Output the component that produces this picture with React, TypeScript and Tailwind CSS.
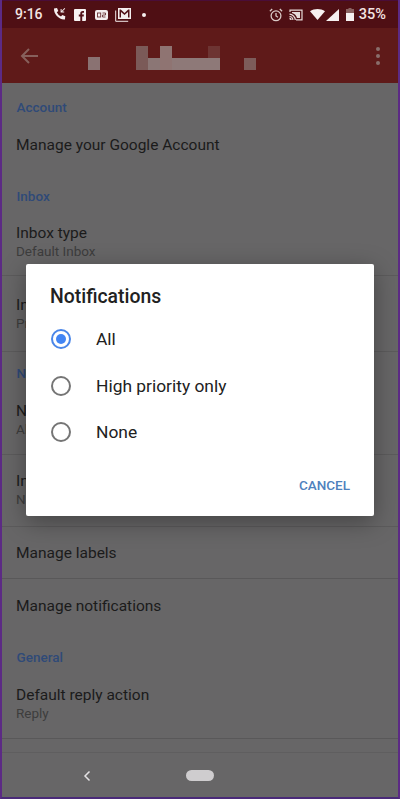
import React from 'react';

const Heading = ({ label, className }: { label: string; className: string }) => (
  <div className={`flex items-end px-[14.5px] pb-[12px] text-[13.5px] leading-4 font-medium text-[#2f4a78] ${className}`}>
    {label}
  </div>
);

const Row = ({
  title,
  sub,
  className
}: {
  title: string;
  sub?: string;
  className: string;
}) => (
  <div className={`px-[14px] ${className}`}>
    <div className="text-[15.5px] leading-5 text-[#1b1b1b]">{title}</div>
    {sub && <div className="mt-[-2px] text-[13.5px] leading-5 text-[#3d3d3d]">{sub}</div>}
  </div>
);

const Radio = ({ label, checked }: { label: string; checked?: boolean }) => (
  <div className="flex h-[46.5px] items-center">
    <div
      className={`ml-[0.5px] flex h-[20px] w-[20px] items-center justify-center rounded-full border-2 ${
        checked ? 'border-[#4a86e8]' : 'border-[#757575]'
      }`}
    >
      {checked && <div className="h-[10px] w-[10px] rounded-full bg-[#4285f4]" />}
    </div>
    <span className="ml-[25.5px] text-[17.4px] text-[#212121]">{label}</span>
  </div>
);

const StatusLeft = () => (
  <div className="flex items-center">
    <span className="ml-[15px] w-[38px] text-[14px] font-medium text-[#f3e4e2]">9:16</span>
    <svg width="14" height="14" viewBox="0 0 14 14" className="mt-[-1px]" fill="#f5eeee">
      <path d="M1 1.5 4 1l1.3 3-1.5 1.2a8 8 0 0 0 4.2 4.2L9.3 8l3 1.2-.4 3.2C6 13 .6 7 1 1.5Z" />
      <path d="M11.5 1 8.6 3.9V2H7.6v3.6h3.6v-1H9.3L12.2 1.7Z" />
    </svg>
    <svg width="12" height="12" viewBox="0 0 12 12" className="ml-[7px]">
      <rect width="12" height="12" rx="1" fill="#f7f2f2" />
      <path d="M8.2 12V7.4h1.5l.2-1.8H8.2V4.5c0-.5.2-.8.9-.8h.9V2.1H8.7C7.2 2.1 6.3 3 6.3 4.4v1.2H4.8v1.8h1.5V12Z" fill="#521218" />
    </svg>
    <svg width="13" height="10" viewBox="0 0 13 10" className="ml-[9px]">
      <rect width="13" height="10" rx="2" fill="#f4eeee" />
      <rect x="2.5" y="3" width="3.2" height="4" fill="none" stroke="#6a3436" strokeWidth="0.9" />
      <path d="M7.5 3h3v2h-3v2h3" fill="none" stroke="#6a3436" strokeWidth="0.9" />
    </svg>
    <svg width="16" height="15" viewBox="0 0 16 15" className="ml-[7px]">
      <path d="M0.7 3.5v10.8h12.5" fill="none" stroke="#f0e8e8" strokeWidth="1" />
      <rect x="3" y="1" width="13" height="11" fill="#f4eeee" />
      <path d="M4.5 2.5v8h1.5V5l3.5 3 3.5-3v5.5h1.5v-8h-1.3L9.5 6 5.8 2.5Z" fill="#521218" />
    </svg>
    <div className="ml-[11px] h-[4px] w-[4px] rounded-full bg-[#f4eeee]" />
  </div>
);

const StatusRight = () => (
  <div className="flex items-center">
    <svg width="14" height="14" viewBox="0 0 14 14" fill="none" stroke="#d9c9c6" strokeWidth="1.3">
      <circle cx="7" cy="7.8" r="4.9" />
      <path d="M7 5v3l2 1.2M.9 3.2 3.2 1M13.1 3.2 10.8 1" />
    </svg>
    <svg width="14" height="12" viewBox="0 0 14 12" className="ml-[6px]" fill="none" stroke="#e6dad8" strokeWidth="1.2">
      <path d="M1 3V1.2h12v9.6H7" />
      <path d="M.5 5.2a6 6 0 0 1 5.8 5.8M.5 7.5A3.6 3.6 0 0 1 3.9 11" />
      <path d="M.5 9.4A1.6 1.6 0 0 1 2 11" strokeWidth="1.6" />
      <path d="M3 3h8v6H8A7 7 0 0 0 3 4Z" fill="#e6dad8" stroke="none" />
    </svg>
    <svg width="15" height="11" viewBox="0 0 15 11" className="ml-[7px]">
      <path d="M0 2.2C4.3-.7 10.7-.7 15 2.2L7.5 11Z" fill="#f6f0f0" />
    </svg>
    <svg width="13" height="12" viewBox="0 0 13 12" className="ml-[1px]">
      <path d="M13 0v12H0Z" fill="#f6f0f0" />
    </svg>
    <svg width="8" height="13" viewBox="0 0 8 13" className="ml-[7px]">
      <path d="M2.5 0h3v1H8v12H0V1h2.5Z" fill="#8a6261" />
      <rect y="5" width="8" height="8" fill="#f6f0f0" />
    </svg>
    <span className="ml-[5px] text-[14.5px] font-medium text-[#f3e4e2]">35%</span>
  </div>
);

const App: React.FC = () => {
  return (
    <div className="relative h-[799px] w-[400px] overflow-hidden border-x-2 border-b-2 border-x-[#5c2a85] border-b-[#4a2a78] bg-[#676667] font-['Roboto',sans-serif]">
      <div className="-mx-[2px] flex h-[28px] items-center justify-between border-t border-t-[#4a0d38] bg-[#4f0f14] pr-[14px]">
        <StatusLeft />
        <StatusRight />
      </div>

      <div className="relative -mx-[2px] flex h-[55px] items-center justify-between bg-[#5f1a19] px-[20px]">
        <svg width="18" height="16" viewBox="0 0 18 16" fill="none" stroke="#87605c" strokeWidth="2">
          <path d="M18 8H2M9 1 2 8l7 7" />
        </svg>
        {/* blurred account name */}
        <svg width="180" height="26" viewBox="0 0 180 26" className="absolute top-[17px] left-[86px]">
          <rect x="2" y="12" width="12" height="13" fill="#8a7272" />
          <rect x="50" y="1" width="12" height="24" fill="#7b5a58" />
          <rect x="62" y="13" width="12" height="12" fill="#8b7675" />
          <rect x="74" y="1" width="12" height="24" fill="#8f7472" />
          <rect x="86" y="13" width="48" height="12" fill="#8e7978" />
          <rect x="122" y="1" width="12" height="12" fill="#6d3432" />
          <rect x="158" y="13" width="12" height="12" fill="#7d5c5a" />
        </svg>
        <div className="flex flex-col gap-[3px]">
          <div className="h-[4px] w-[4px] rounded-full bg-[#8a6e6c]" />
          <div className="h-[4px] w-[4px] rounded-full bg-[#8a6e6c]" />
          <div className="h-[4px] w-[4px] rounded-full bg-[#8a6e6c]" />
        </div>
      </div>

      <Heading label="Account" className="h-[44px]" />
      <Row title="Manage your Google Account" className="h-[45px] pt-[8px]" />
      <Heading label="Inbox" className="h-[44px]" />
      <Row title="Inbox type" sub="Default Inbox" className="h-[60px] border-b border-[#5c5b5c] pt-[7px]" />
      <Row title="Inbox categories" sub="Primary" className="h-[76px] border-b border-[#5c5b5c] pt-[19px]" />
      <Heading label="Notifications" className="h-[41px]" />
      <Row title="Notifications" sub="All" className="h-[62px] border-b border-[#5c5b5c] pt-[8px]" />
      <Row title="Inbox notifications" sub="Notify once" className="h-[72px] border-b border-[#5c5b5c] pt-[16px]" />
      <Row title="Manage labels" className="h-[52px] border-b border-[#595859] pt-[16px]" />
      <Row title="Manage notifications" className="h-[54px] pt-[17px]" />
      <Heading label="General" className="h-[44px]" />
      <Row title="Default reply action" sub="Reply" className="h-[62px] border-b border-[#595859] pt-[8px]" />

      <div className="mt-[13px] flex h-[46px] items-center border-t border-[#5f5e5f] pl-[81px]">
        <svg width="8" height="12" viewBox="0 0 8 12" fill="none" stroke="#e4e2e4" strokeWidth="1.5">
          <path d="M6.5 1.5 2 6l4.5 4.5" />
        </svg>
        <div className="ml-[95px] h-[11px] w-[28px] rounded-full bg-[#cfcdcf]" />
      </div>

      {/* dialog */}
      <div className="absolute top-[264px] left-[24px] flex h-[252px] w-[348px] flex-col rounded-[2px] bg-white pt-[21px] pr-[24px] pl-[24px] shadow-[0_6px_24px_rgba(0,0,0,0.35)]">
        <h2 className="text-[19.4px] leading-[24px] font-medium text-[#212121]">Notifications</h2>
        <div className="mt-[7px] flex flex-col">
          <Radio label="All" checked />
          <Radio label="High priority only" />
          <Radio label="None" />
        </div>
        <div className="mt-[19px] flex justify-end">
          <span className="text-[13.5px] font-medium tracking-[0px] text-[#4f81bd]">CANCEL</span>
        </div>
      </div>
    </div>
  );
};

export default App;
